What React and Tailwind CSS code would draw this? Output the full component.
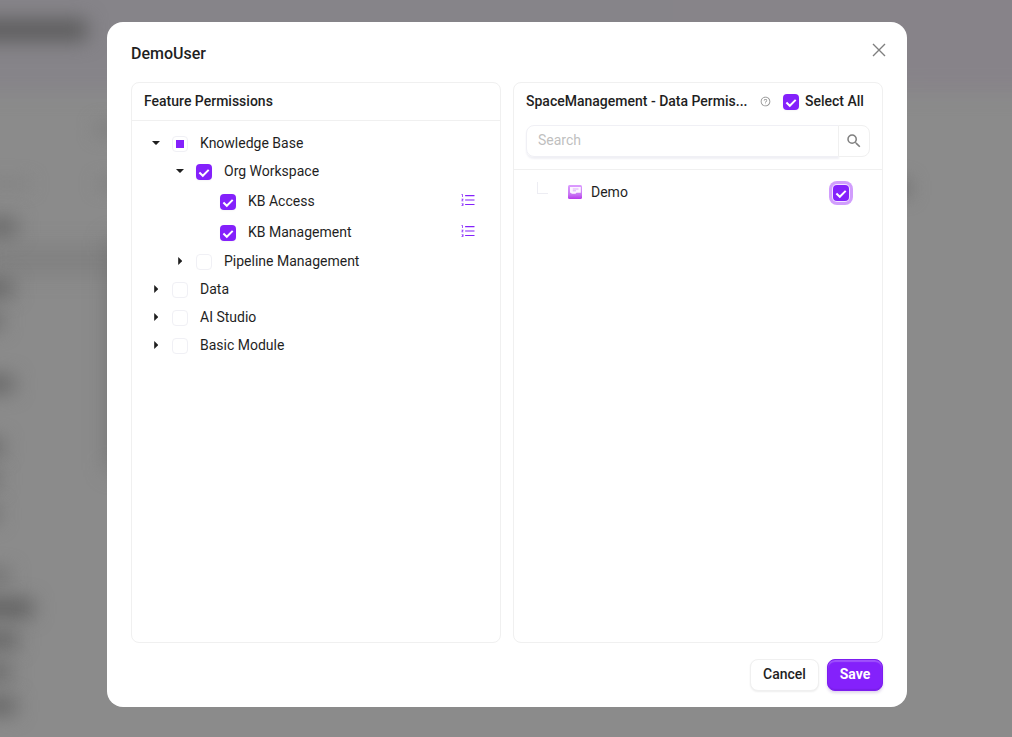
import React from 'react';
import { AiOutlineOrderedList, AiOutlineQuestionCircle } from 'react-icons/ai';
import { MdSearch } from 'react-icons/md';

function Checkbox({ state = 'off', focused = false }) {
  if (state === 'on') {
    return (
      <span
        className={`flex size-4 shrink-0 items-center justify-center rounded-[4px] bg-[#8421fb] ${
          focused ? 'shadow-[0_0_0_1px_#f3e5ff,0_0_0_4px_#d19dfd]' : 'shadow-[0_1px_2px_rgba(0,0,0,0.04)]'
        }`}
      >
        <svg viewBox="0 0 16 16" className="size-4" fill="none" stroke="#fff" strokeWidth="2">
          <path d="M3.4 8.5 6.8 11.8 12.7 5.9" />
        </svg>
      </span>
    );
  }
  return (
    <span className="flex size-4 shrink-0 items-center justify-center rounded-[4px] border border-[#f0f0f5] bg-white">
      {state === 'partial' && <span className="size-2 bg-[#8421fb]" />}
    </span>
  );
}

function Caret({ open }) {
  return (
    <svg viewBox="0 0 10 10" className="size-[10px]" fill="#1f1f1f">
      {open ? <path d="M1 3H9L5.6 6.6Q5 7.1 4.4 6.6Z" /> : <path d="M3.2 1V9L6.8 5.6Q7.3 5 6.8 4.4Z" />}
    </svg>
  );
}

const rows = [
  { label: 'Knowledge Base', level: 'pl-3', caret: 'open', state: 'partial' },
  { label: 'Org Workspace', level: 'pl-9', caret: 'open', state: 'on' },
  { label: 'KB Access', level: 'pl-[60px]', state: 'on', list: true },
  { label: 'KB Management', level: 'pl-[60px]', state: 'on', list: true },
  { label: 'Pipeline Management', level: 'pl-9', caret: 'closed', state: 'off' },
  { label: 'Data', level: 'pl-3', caret: 'closed', state: 'off' },
  { label: 'AI Studio', level: 'pl-3', caret: 'closed', state: 'off' },
  { label: 'Basic Module', level: 'pl-3', caret: 'closed', state: 'off' },
];

function TreeRow({ row }) {
  return (
    <div className={`flex items-center ${row.list ? 'h-[31px]' : 'h-7'} ${row.level}`}>
      <span className="flex w-6 justify-center">{row.caret && <Caret open={row.caret === 'open'} />}</span>
      <span className="mr-3 pt-0.5 pl-1">
        <Checkbox state={row.state} />
      </span>
      <span>{row.label}</span>
      {row.list && <AiOutlineOrderedList className="mr-6 mb-0.5 ml-auto size-4 text-[#8421fb]" />}
    </div>
  );
}

function Backdrop() {
  return (
    <div className="absolute inset-0 overflow-hidden bg-[#8b8b8b]">
      <div className="absolute -top-10 -right-10 -left-10 h-[132px] bg-linear-to-r from-[#868489] via-[#868489] to-[#878389] blur-[10px]" />
      <div className="absolute top-[248px] -left-5 h-6 w-[180px] bg-[#7f7f7f] blur-[11px]" />
      <div className="absolute top-[240px] left-[108px] h-[230px] w-6 bg-[#727272] blur-[11px]" />
      <div className="absolute top-[20px] -left-10 h-5 w-[127px] bg-[#585858] blur-[10px]" />
      <div className="absolute top-[219px] -left-10 h-4 w-[57px] bg-[#646464] blur-[10px]" />
      <div className="absolute top-[280px] -left-10 h-4 w-[53px] bg-[#626262] blur-[10px]" />
      <div className="absolute top-[313px] -left-10 h-4 w-[42px] bg-[#686868] blur-[10px]" />
      <div className="absolute top-[376px] -left-10 h-4 w-[54px] bg-[#626262] blur-[10px]" />
      <div className="absolute top-[439px] -left-10 h-4 w-[43px] bg-[#656565] blur-[10px]" />
      <div className="absolute top-[471px] -left-10 h-4 w-[39px] bg-[#6b6b6b] blur-[10px]" />
      <div className="absolute top-[506px] -left-10 h-4 w-[38px] bg-[#6b6b6b] blur-[10px]" />
      <div className="absolute top-[570px] -left-10 h-3 w-[50px] bg-[#6a6a6a] blur-[10px]" />
      <div className="absolute top-[600px] -left-10 h-4 w-[73px] bg-[#585858] blur-[10px]" />
      <div className="absolute top-[632px] -left-10 h-4 w-[58px] bg-[#606060] blur-[10px]" />
      <div className="absolute top-[664px] -left-10 h-4 w-[51px] bg-[#666666] blur-[10px]" />
      <div className="absolute top-[698px] -left-10 h-4 w-[56px] bg-[#606060] blur-[10px]" />
      <div className="absolute top-[123px] left-[96px] h-3 w-8 bg-[#7c7c7c] blur-[9px]" />
      <div className="absolute top-[180px] -left-4 h-2 w-[46px] bg-[#808080] blur-[9px]" />
      <div className="absolute top-[180px] left-[98px] h-2 w-8 bg-[#7c7c7c] blur-[9px]" />
      <div className="absolute top-[180px] right-[102px] h-4 w-5 bg-[#6e6e6e] blur-[9px]" />
    </div>
  );
}

export default function App() {
  return (
    <div className="relative flex h-[737px] w-[1012px] justify-center overflow-hidden pt-[22px] font-['Roboto',sans-serif] text-sm text-[#1f1f1f]">
      <Backdrop />
      <div className="relative mr-[-2px] flex h-[685px] w-[800px] flex-col rounded-2xl bg-white px-6">
        <div className="flex h-[60px] items-center justify-between">
          <h1 className="pt-1 text-base leading-6 font-medium">DemoUser</h1>
          <svg viewBox="0 0 14 14" className="mr-[-3px] mb-1 size-[14px]" fill="none" stroke="#7f7f7f" strokeWidth="1.4">
            <path d="M1 1 13 13M13 1 1 13" />
          </svg>
        </div>

        <div className="flex h-[561px] gap-3">
          <section className="w-[370px] rounded-lg border border-[#f0f0f0]">
            <h2 className="flex h-[38px] items-center border-b border-[#f0f0f0] px-3 pb-0.5 font-medium">Feature Permissions</h2>
            <div className="pt-2">
              {rows.map((row) => (
                <TreeRow key={row.label} row={row} />
              ))}
            </div>
          </section>

          <section className="w-[370px] rounded-lg border border-[#f0f0f0]">
            <div className="h-[87px] border-b border-[#f0f0f0] px-3">
              <div className="flex h-[42px] items-center pb-1.5 font-medium">
                <h2 className="w-[221px] whitespace-nowrap">SpaceManagement - Data Permis...</h2>
                <AiOutlineQuestionCircle className="mt-px ml-[12.5px] size-[11px] text-[#8c8c8c]" />
                <span className="mt-0.5 mr-1.5 ml-[12.5px]">
                  <Checkbox state="on" />
                </span>
                <span className="whitespace-nowrap">Select All</span>
              </div>
              <div className="flex h-8 w-[344px]">
                <div className="flex flex-1 rounded-l-lg border border-[#f0f0f5] px-[11px] pt-1 text-[#bfbfbf] shadow-[0_2px_2px_#f0f0f5]">
                  Search
                </div>
                <button className="-ml-px flex w-8 items-center justify-center rounded-r-lg border border-[#f0f0f0] bg-white">
                  <MdSearch className="size-[18px] text-[#7f7f7f]" />
                </button>
              </div>
            </div>
            <div className="mt-2 flex h-7 items-center pl-[23px]">
              <span className="mb-[9px] h-3 w-[11px] border-b border-l border-[#ededf3]" />
              <svg viewBox="0 0 14 14" className="ml-5 size-[14px]">
                <defs>
                  <linearGradient id="book" x1="0" y1="0" x2="0" y2="1">
                    <stop offset="0" stopColor="#dc9cff" />
                    <stop offset="0.65" stopColor="#c979f4" />
                    <stop offset="1" stopColor="#b738ec" />
                  </linearGradient>
                </defs>
                <rect width="14" height="14" rx="1.5" fill="url(#book)" />
                <path d="M2 2H12.8V7.8H8.5L7.5 8.7H4L2 7.5Z" fill="#fcf5ff" />
                <path d="M4.8 4H10.5M4.8 5.8H8" stroke="#dcabf9" />
              </svg>
              <span className="ml-[9px]">Demo</span>
              <span className="mt-0.5 mr-[33px] ml-auto">
                <Checkbox state="on" focused />
              </span>
            </div>
          </section>
        </div>

        <div className="mt-4 flex justify-end gap-2">
          <button className="h-8 w-[69px] rounded-lg border border-[#f0f0f0] bg-white pb-0.5 font-medium shadow-[0_1px_2px_rgba(0,0,0,0.07)]">
            Cancel
          </button>
          <button className="h-8 w-14 rounded-lg border border-[#7d1df0] bg-[#8421fb] pb-0.5 font-bold text-white shadow-[inset_0_2px_1px_rgba(255,255,255,0.22),inset_0_-1px_1px_rgba(0,0,0,0.08),0_2px_3px_rgba(80,20,150,0.18)]">
            Save
          </button>
        </div>
      </div>
    </div>
  );
}
